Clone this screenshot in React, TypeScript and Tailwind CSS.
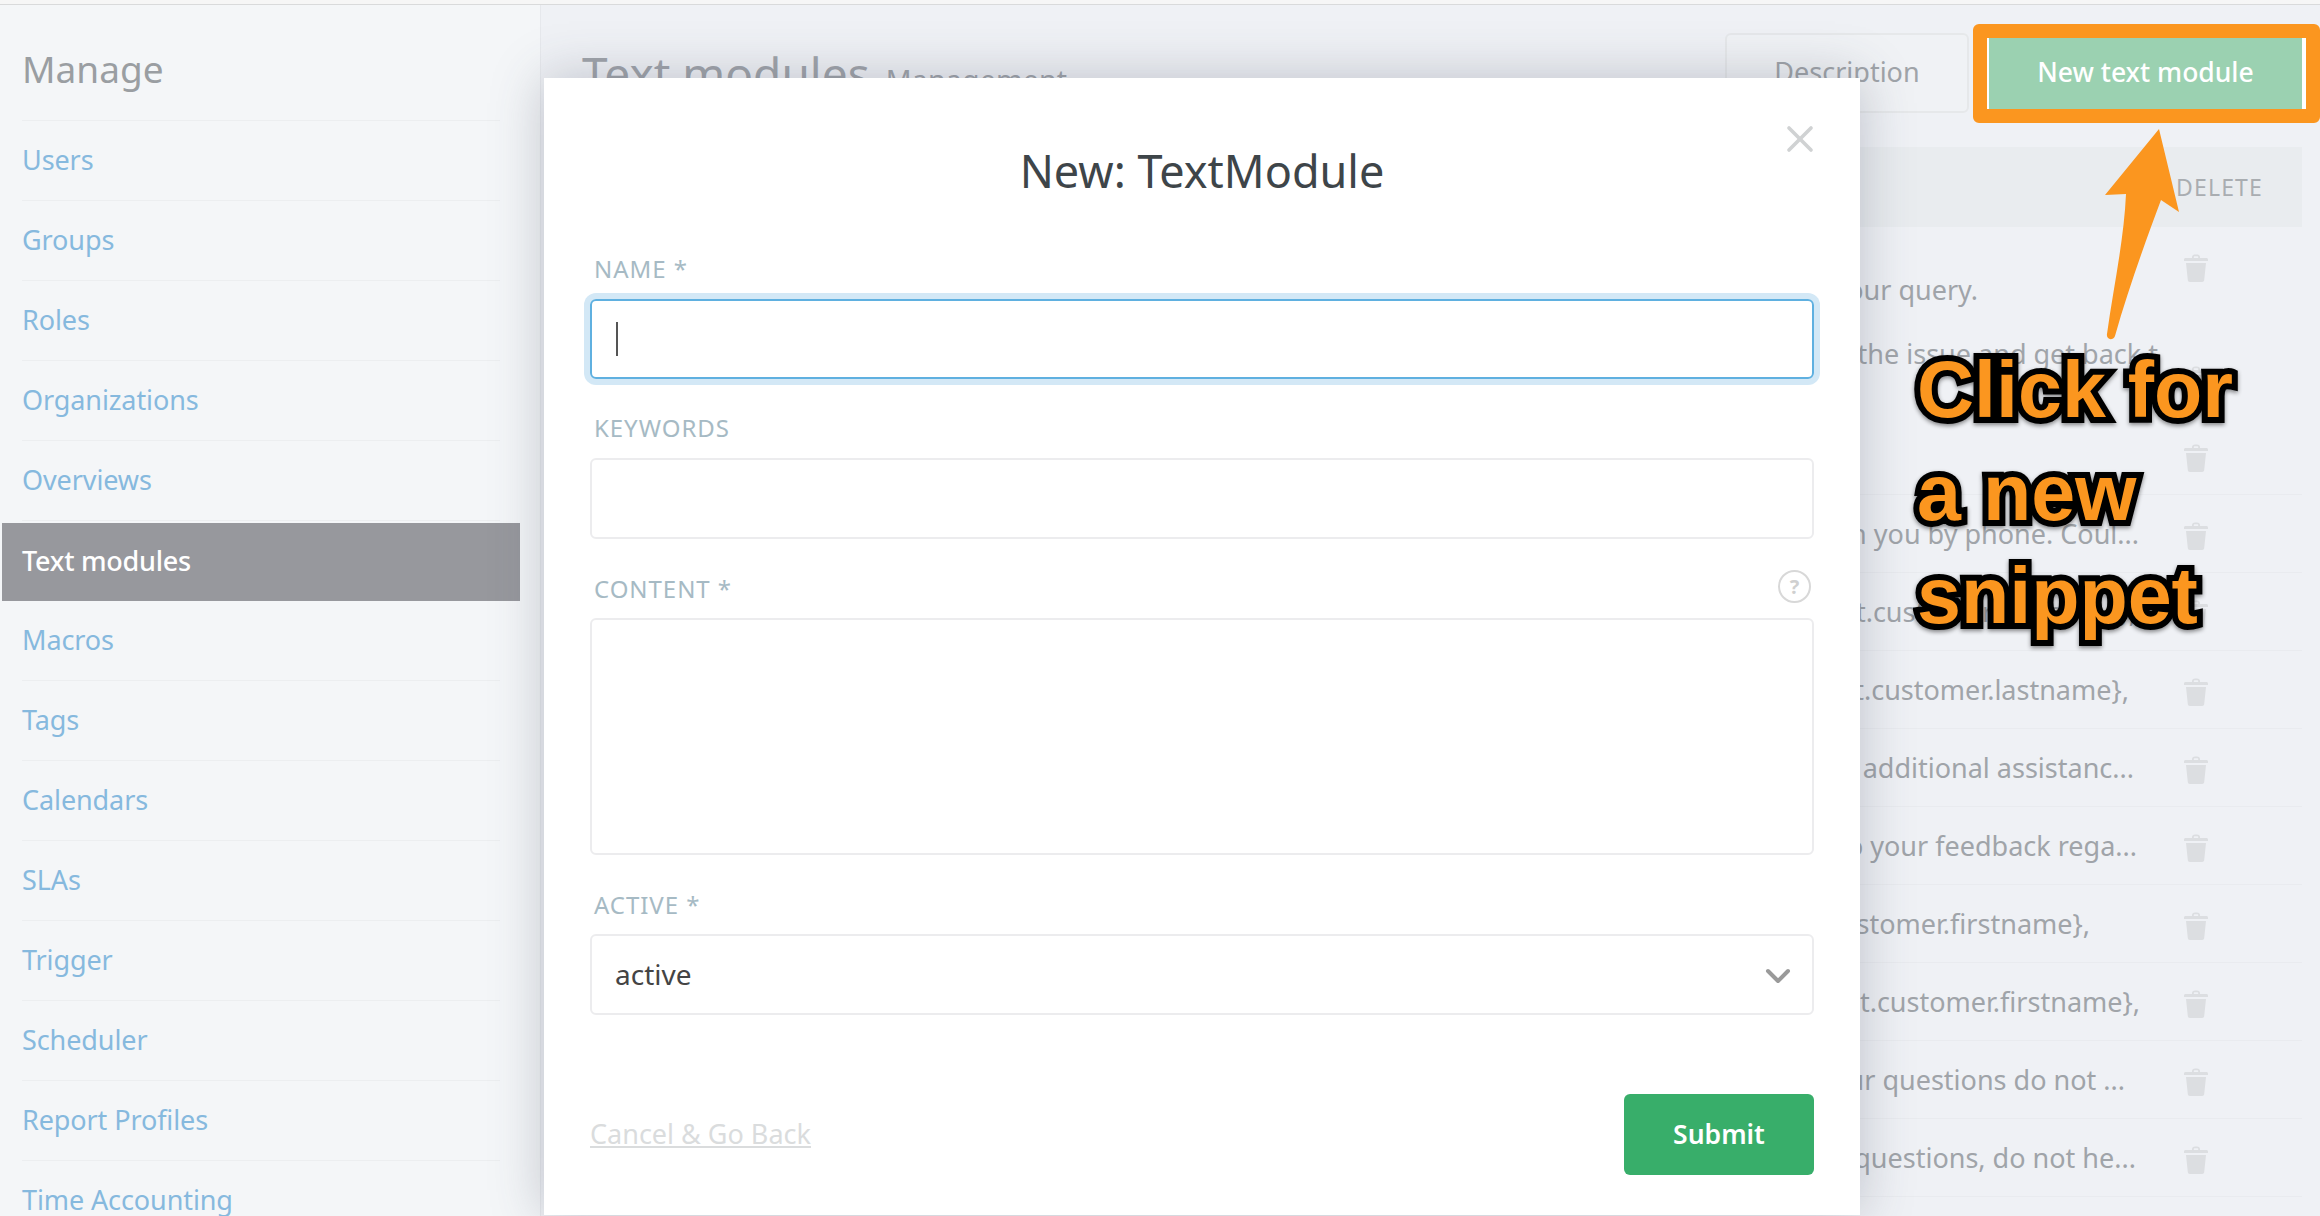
import { ChevronDown, X } from "lucide-react";

const navItems = [
  "Users",
  "Groups",
  "Roles",
  "Organizations",
  "Overviews",
  "Text modules",
  "Macros",
  "Tags",
  "Calendars",
  "SLAs",
  "Trigger",
  "Scheduler",
  "Report Profiles",
  "Time Accounting",
];

const rows = [
  { text: "Thanks for your query.", row: "h-[112px]", cell: "pr-[206px] pt-[46px]", border: "" },
  { text: "We will look into the issue and get back t", row: "h-[78px]", cell: "pr-[26px] -mt-[2px]", border: "" },
  { text: "", row: "h-[78px]", cell: "pr-[45px] pt-[22px]", border: "border-b" },
  { text: "We tried to reach you by phone. Coul...", row: "h-[78px]", cell: "pr-[45px] pt-[22px]", border: "border-b" },
  { text: "#{ticket.customer.firstname},", row: "h-[78px]", cell: "pr-[48px] pt-[22px]", border: "border-b" },
  { text: "#{ticket.customer.lastname},", row: "h-[78px]", cell: "pr-[55px] pt-[22px]", border: "border-b" },
  { text: "If you need additional assistanc...", row: "h-[78px]", cell: "pr-[50px] pt-[22px]", border: "border-b" },
  { text: "Thanks to your feedback rega...", row: "h-[78px]", cell: "pr-[47px] pt-[22px]", border: "border-b" },
  { text: "#{ticket.customer.firstname},", row: "h-[78px]", cell: "pr-[94px] pt-[22px]", border: "border-b" },
  { text: "#{ticket.customer.firstname},", row: "h-[78px]", cell: "pr-[44px] pt-[22px]", border: "border-b" },
  { text: "If your questions do not ...", row: "h-[78px]", cell: "pr-[59px] pt-[22px]", border: "border-b" },
  { text: "If you have questions, do not he...", row: "h-[78px]", cell: "pr-[48px] pt-[22px]", border: "border-b" },
];

function TrashIcon() {
  return (
    <svg width="24" height="28" viewBox="0 0 24 28" fill="#dcdee1">
      <path d="M8 3.2C8 1.400 9.200.400 11 .400h2c1.800 0 3 1 3 2.800V4h6.500c.800 0 1.500.700 1.500 1.500V7H0V5.500C0 4.700.700 4 1.500 4H8zm1.800.800h4.400v-.800c0-.700-.300-1-1.200-1h-2c-.900 0-1.200.300-1.200 1z" />
      <path d="M2 9h20l-1.800 17c-.100 1.100-.900 2-2 2H5.800c-1.100 0-1.900-.900-2-2z" />
    </svg>
  );
}

function FieldLabel({ children }: { children: string }) {
  return <div className="h-[30px] mb-[15px] pl-[4px] text-[24px] leading-[30px] tracking-[0.04em] uppercase text-[#a6bac4]">{children}</div>;
}

export default function App() {
  return (
    <div className="relative w-[2320px] h-[1216px] overflow-hidden flex flex-col bg-[#eff1f5] font-['Noto_Sans',sans-serif]">
      <div className="h-[5px] shrink-0 bg-[#f6f6f6] border-b border-[#d9dadb]" />

      <div className="flex flex-1 min-h-0">
        {/* Sidebar */}
        <aside className="w-[541px] shrink-0 bg-[#f4f6f8] border-r border-[#e6e8ec] pl-[22px] pr-[40px]">
          <div className="h-[116px] border-b border-[#eceef0] pt-[40px] text-[37px] leading-[48px] text-[#9a9ea2]">Manage</div>
          {navItems.map((item) =>
            item === "Text modules" ? (
              <div key={item} className="h-20 pt-[2px] -mx-[20px]">
                <div className="h-[78px] bg-[#97989d] pl-[20px] pb-[2px] flex items-center text-[27px] tracking-[-0.25px] font-medium text-white">{item}</div>
              </div>
            ) : (
              <div key={item} className="h-20 pb-[1px] border-b border-[#eceef0] flex items-center text-[27px] tracking-[-0.1px] text-[#86b9de]">
                {item}
              </div>
            ),
          )}
        </aside>

        {/* Main content behind the modal */}
        <main className="flex-1 min-w-0 pl-[41px] pr-[18px] pt-[28px]">
          <div className="flex items-start justify-between h-[80px] -mr-[4px]">
            <div className="flex items-baseline gap-[16px] text-[#a0a4aa] pt-[6px]">
              <span className="text-[46px]">Text modules</span>
              <span className="text-[28.5px] tracking-[0.2px]">Management</span>
            </div>
            <div className="flex items-start gap-[18px]">
              <div className="w-[244px] h-[80px] rounded-[6px] border-2 border-[#e6e8ea] bg-[#f0f2f5] pb-[2px] flex items-center justify-center text-[27px] text-[#a0a4a9]">Description</div>
              <div className="w-[319px] h-[80px] bg-white pl-[2px] pr-[4px]">
                <div className="h-full bg-[#9bd1b1] flex items-center justify-center text-[26.5px] font-medium text-white">New text module</div>
              </div>
            </div>
          </div>

          <div className="mt-[34px] h-[80px] bg-[#e9ecef] flex items-center justify-end pr-[39px] text-[23px] tracking-[0.05em] text-[#a9adb1]">DELETE</div>

          {rows.map((row, i) => (
            <div key={i} className={`flex border-[#e9ebef] ${row.row} ${row.border}`}>
              <div className={`flex-1 min-w-0 flex justify-end whitespace-nowrap text-[27px] leading-[34px] text-[#a0a4a9] ${row.cell}`}>{row.text}</div>
              <div className="w-[118px] shrink-0 pt-[27px]">
                <TrashIcon />
              </div>
            </div>
          ))}
        </main>
      </div>

      {/* Modal */}
      <div className="absolute left-[544px] top-[78px] w-[1316px] h-[1137px] bg-white shadow-[0_0_50px_rgba(60,70,90,0.28)] pl-[46px] pr-[46px] pt-[65px] flex flex-col">
        <button className="absolute right-[38px] top-[39px] text-[#d0d2d3]">
          <X size={44} strokeWidth={2} />
        </button>
        <h2 className="h-[56px] mb-[55px] text-center text-[45px] leading-[56px] text-[#3e4549]">New: TextModule</h2>

        <FieldLabel>Name *</FieldLabel>
        <div className="h-[80px] mb-[34px] rounded-[6px] border-2 border-[#5fb0e0] shadow-[0_0_0_6px_#d3e8f6] pl-[24px] flex items-center">
          <div className="w-[2px] h-[34px] bg-[#555]" />
        </div>

        <FieldLabel>Keywords</FieldLabel>
        <div className="h-[81px] mb-[35px] rounded-[6px] border-2 border-[#ececee]" />

        <div className="flex justify-between">
          <FieldLabel>Content *</FieldLabel>
          <div className="w-[33px] h-[33px] -mt-[4px] mr-[3px] rounded-full border-2 border-[#d8d8d8] flex items-center justify-center text-[20px] font-bold text-[#d0d0d0]">?</div>
        </div>
        <div className="h-[237px] -mt-[1px] mb-[35px] rounded-[6px] border-2 border-[#ececee]" />

        <FieldLabel>Active *</FieldLabel>
        <div className="h-[81px] -mt-[1px] rounded-[6px] border-2 border-[#ececee] pl-[23px] pr-[14px] flex items-center justify-between text-[28px] text-[#444]">
          <span className="pb-[2px]">active</span>
          <ChevronDown size={40} strokeWidth={2.4} className="text-[#9a9a9a] mt-[2px]" />
        </div>

        <div className="mt-[79px] flex items-center justify-between">
          <a className="text-[27px] underline text-[#dadcdd]">Cancel &amp; Go Back</a>
          <button className="w-[190px] h-[81px] rounded-[6px] bg-[#38ae6a] text-[26.5px] font-semibold text-white">Submit</button>
        </div>
      </div>

      {/* Annotation */}
      <div className="absolute left-[1973px] top-[24px] w-[347px] h-[99px] rounded-[6px] border-[14px] border-[#fb961f]" />
      <svg className="absolute left-[2090px] top-[120px]" width="110" height="230" viewBox="2090 120 110 230">
        <path
          d="M2159 129 L2179 212 L2161 200 C2146 240 2128 290 2115 336 C2113 341 2106 340 2107 334 C2113 290 2124 240 2126 194 L2105 195 Z"
          fill="#fb961f"
        />
      </svg>
      <div className="absolute left-[1917px] top-[338px] flex flex-col font-['Liberation_Sans',sans-serif] font-bold text-[79px] leading-[103px] text-[#fb961f] [-webkit-text-stroke:12px_#000] [paint-order:stroke_fill] drop-shadow-[0_2px_2px_rgba(0,0,0,0.45)]">
        <span>Click for</span>
        <span>a new</span>
        <span>snippet</span>
      </div>
    </div>
  );
}
